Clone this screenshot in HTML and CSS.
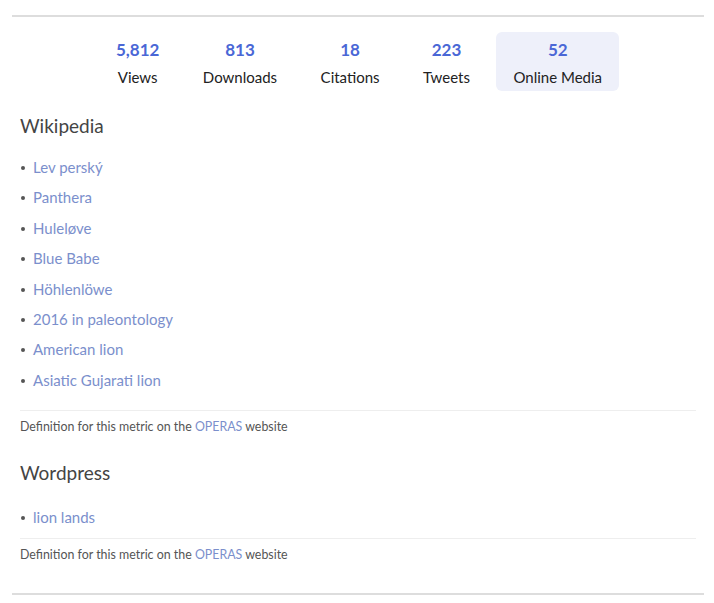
FILE: index.html
```html
<!DOCTYPE html>
<html lang="en">
<head>
    <meta charset="UTF-8">
    <meta name="viewport" content="width=device-width, initial-scale=1.0">
    <title>Metrics</title>
    <link rel="stylesheet" href="styles.css">
</head>
<body>

    <div class="metrics">
        <!-- Stat tabs -->
        <div class="stats">
            <div class="stat"><div class="stat-num">5,812</div><div class="stat-label">Views</div></div>
            <div class="stat"><div class="stat-num">813</div><div class="stat-label">Downloads</div></div>
            <div class="stat"><div class="stat-num">18</div><div class="stat-label">Citations</div></div>
            <div class="stat"><div class="stat-num">223</div><div class="stat-label">Tweets</div></div>
            <div class="stat active-stat"><div class="stat-num">52</div><div class="stat-label">Online Media</div></div>
        </div>

        <!-- Wikipedia -->
        <div class="source">
            <h2>Wikipedia</h2>
            <ul class="links">
                <li><a href="#">Lev perský</a></li>
                <li><a href="#">Panthera</a></li>
                <li><a href="#">Huleløve</a></li>
                <li><a href="#">Blue Babe</a></li>
                <li><a href="#">Höhlenlöwe</a></li>
                <li><a href="#">2016 in paleontology</a></li>
                <li><a href="#">American lion</a></li>
                <li><a href="#">Asiatic Gujarati lion</a></li>
            </ul>
            <p class="definition">Definition for this metric on the <a href="#">OPERAS</a> website</p>
        </div>

        <!-- Wordpress -->
        <div class="source">
            <h2>Wordpress</h2>
            <ul class="links short">
                <li><a href="#">lion lands</a></li>
            </ul>
            <p class="definition">Definition for this metric on the <a href="#">OPERAS</a> website</p>
        </div>
    </div>

</body>
</html>
```

FILE: styles.css
```css
body {
    font-family: Lato, "Open Sans", sans-serif;
    background-color: #fff;
    margin: 0;
    padding: 15px 10px 0 12px;
    color: #333;
}

a {
    color: #7b8fcc;
    text-decoration: none;
}

.metrics {
    border-top: 2px solid #ddd;
    border-bottom: 2px solid #ddd;
    padding: 15px 8px 30px 8px;
}

.stats {
    display: flex;
    justify-content: center;
    gap: 9.5px;
    padding-left: 2px;
}

.stat {
    padding: 6px 17px 3px;
    text-align: center;
    border-radius: 6px;
}

.active-stat {
    background-color: #eef0fa;
}

.stat-num {
    color: #4a67d6;
    font-weight: bold;
    font-size: 17px;
    line-height: 24px;
    margin-bottom: 4px;
}

.stat-label {
    color: #222;
    font-size: 15px;
    line-height: 22px;
}

.source h2 {
    font-size: 19px;
    font-weight: normal;
    line-height: 24px;
    color: #444;
    margin: 23px 0 0;
}

.source + .source h2 {
    margin-top: 26px;
}

.links {
    list-style: none;
    margin: 14px 0 0;
    padding: 0 0 15px;
    border-bottom: 1px solid #eee;
}

.links.short {
    margin-top: 17px;
    padding-bottom: 5px;
}

.links li {
    font-size: 15px;
    line-height: 30.4px;
    padding-left: 13px;
    position: relative;
}

.links li::before {
    content: "";
    position: absolute;
    left: 1px;
    top: 14px;
    width: 4px;
    height: 4px;
    border-radius: 50%;
    background-color: #555;
}

.definition {
    font-size: 12.4px;
    line-height: 16px;
    color: #555;
    margin: 8px 0 0;
}
```
